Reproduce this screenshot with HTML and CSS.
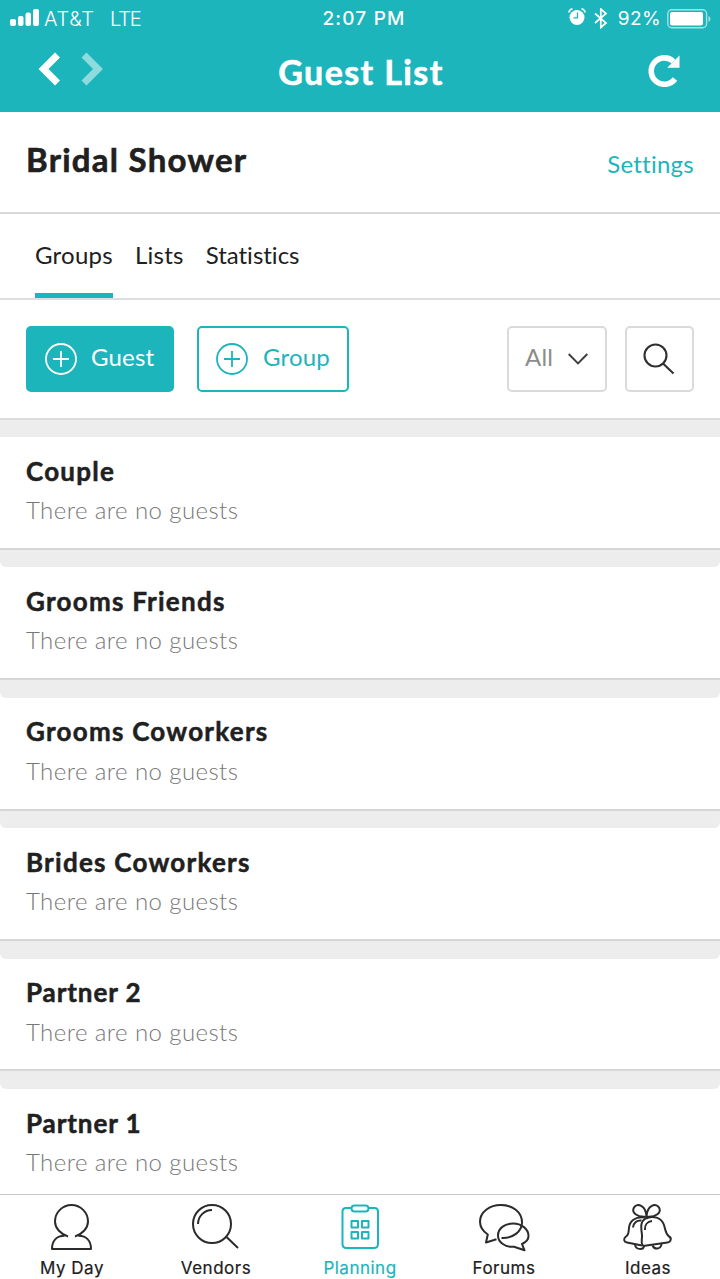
FILE: index.html
```html
<!DOCTYPE html>
<html lang="en">
<head>
<meta charset="utf-8">
<title>Guest List</title>
<link rel="stylesheet" href="styles.css">
</head>
<body>
<div class="app">
  <header class="header">
    <div class="status">
      <div class="status-left">
        <svg class="signal" width="30" height="20" viewBox="0 0 30 20" fill="#fff"><rect x="0" y="11" width="6" height="7" rx="2"/><rect x="8" y="8" width="5.500" height="10" rx="2"/><rect x="15.500" y="4.500" width="5.500" height="13.500" rx="2"/><rect x="23" y="1" width="6" height="17" rx="2"/></svg>
        <span class="carrier">AT&amp;T</span><span class="network">LTE</span>
      </div>
      <span class="time">2:07 PM</span>
      <div class="status-right">
        <svg class="alarm" width="18" height="18" viewBox="0 0 18 18"><circle cx="9" cy="9.500" r="7.500" fill="#fff"/><path d="M.8 4.500Q1.500 1.500 4.500.8M17.200 4.500Q16.500 1.500 13.500.8" stroke="#fff" stroke-width="1.600" fill="none"/><path d="M9.500 4.500v5.300H5.500" stroke="#1cb5bc" stroke-width="1.300" fill="none"/></svg>
        <svg class="bluetooth" width="14" height="21" viewBox="0 0 14 21" fill="none" stroke="#fff" stroke-width="1.700"><path d="M1 5.500l11 9.500-5.200 4.500V1L12 5.500 1 15"/></svg>
        <span class="percent">92%</span>
        <svg class="battery" width="44" height="20" viewBox="0 0 44 20"><rect x=".8" y=".8" width="38.800" height="18" rx="4" fill="none" stroke="#a4e1e3" stroke-width="1.400"/><rect x="3" y="3" width="33" height="13.600" rx="2" fill="#fff"/><path d="M41.500 7v6q2-1 2-3t-2-3z" fill="#a4e1e3"/></svg>
      </div>
    </div>
    <div class="nav">
      <svg class="arrows" width="68" height="36" viewBox="0 0 68 36" fill="none" stroke-width="7"><path d="M20.500 4L6.500 18l14 14" stroke="#fff"/><path d="M47 4L61 18 47 32" stroke="#8edbde"/></svg>
      <h1 class="nav-title">Guest List</h1>
      <svg class="reload" width="34" height="34" viewBox="0 0 34 34"><path d="M28 25A13.200 13.200 0 1 1 26.500 7.500" fill="none" stroke="#fff" stroke-width="5.600"/><path d="M32.500 1.500v12.300H20.200z" fill="#fff"/></svg>
    </div>
  </header>

  <section class="event">
    <h2 class="event-name">Bridal Shower</h2>
    <a class="settings">Settings</a>
  </section>

  <nav class="tabs">
    <a class="tab active">Groups</a>
    <a class="tab">Lists</a>
    <a class="tab">Statistics</a>
  </nav>

  <section class="tools">
    <button class="btn btn-guest"><svg width="32" height="32" viewBox="0 0 32 32" fill="none" stroke="currentColor" stroke-width="1.800"><circle cx="16" cy="16" r="15"/><path d="M16 8v16M8 16h16"/></svg><span>Guest</span></button>
    <button class="btn btn-group"><svg width="32" height="32" viewBox="0 0 32 32" fill="none" stroke="currentColor" stroke-width="1.800"><circle cx="16" cy="16" r="15"/><path d="M16 8v16M8 16h16"/></svg><span>Group</span></button>
    <button class="btn btn-all"><span>All</span><svg width="20" height="12" viewBox="0 0 20 12" fill="none" stroke="#3c3c3c" stroke-width="1.900"><path d="M.7 1L10 10.300 19.300 1"/></svg></button>
    <button class="btn btn-search"><svg width="32" height="32" viewBox="0 0 32 32" fill="none" stroke="#303030" stroke-width="2.100"><circle cx="12.500" cy="12.500" r="11"/><path d="M20 20.500L30.500 30.500"/></svg></button>
  </section>

  <main class="list">
    <article class="card"><h3>Couple</h3><p>There are no guests</p></article>
    <article class="card"><h3>Grooms Friends</h3><p>There are no guests</p></article>
    <article class="card"><h3>Grooms Coworkers</h3><p>There are no guests</p></article>
    <article class="card"><h3>Brides Coworkers</h3><p>There are no guests</p></article>
    <article class="card numbered"><h3>Partner 2</h3><p>There are no guests</p></article>
    <article class="card numbered"><h3>Partner 1</h3><p>There are no guests</p></article>
  </main>

  <footer class="tabbar">
    <a class="item"><svg width="52" height="50" viewBox="0 0 52 50"><path d="M22 33.500C14.500 31 9 25 9 18.500a16.500 16.500 0 0 1 33 0C42 25 36.500 31 29 33.500M18.500 32.800C10.500 33 6 38 6 46h39c0-8-4.500-13-12.500-13.200"/></svg><span>My Day</span></a>
    <a class="item"><svg width="52" height="50" viewBox="0 0 52 50"><circle cx="22" cy="21" r="19"/><path d="M8 21A14 14 0 0 1 22 7M36 33.500L48 45"/></svg><span>Vendors</span></a>
    <a class="item current"><svg width="52" height="50" viewBox="0 0 52 50"><path d="M17.500 5H12q-3.500 0-3.500 3.500v32.500q0 4 4 4h27.500q4 0 4-4V8.500q0-3.500-3.500-3.500h-6"/><rect x="17.500" y="2.500" width="17" height="6" rx="3"/><path d="M17.500 18h6.500v6.500h-6.500zM28 18h6.500v6.500h-6.500zM17.500 29h6.500v6.500h-6.500zM28 29h6.500v6.500h-6.500z"/></svg><span>Planning</span></a>
    <a class="item"><svg width="52" height="50" viewBox="0 0 52 50"><path d="M18.500 36.200L8 39.500 9.800 31.500C4.500 28 2 23.500 2 18.500 2 9 11.500 2 23 2s21 7 21 17.500C44 28 35.500 35.500 23.500 35"/><path d="M44 41l2.500 6.300L36 43.800C27.500 44.500 20 39.500 20 32.500 20 25.500 26.500 20.500 35 20.500s15.500 5.500 15.500 12.500q0 5-6.500 8z"/></svg><span>Forums</span></a>
    <a class="item bells"><svg width="52" height="50" viewBox="0 0 52 50"><path d="M25.500 13.500C16 14.500 10 9.500 13 4.500s12-2.500 12.500 9c.5-11.500 9.500-14 12.500-9s-3 10-12.500 9z"/><path d="M22 43C19 39 21.500 36.500 21 32 20 24 19 19 24.500 15.500 32 12 40.500 14.500 43 22c2 6.500 1.500 9 5 11.500 3 1.500 2 5.500-1.500 6L22 43"/><path d="M23.500 14.500C14 13.500 8.500 18 8 25c-.5 6-1 7.500-3.500 9-2.500 2-1.500 5 1.500 5.500L21 42.500M12 24.500c.5-5 4-7.500 8.500-7M24 27c-.5-5 2.500-8.500 7-9M14 41.500q.5 4.500 5.500 4.500 3 0 3.500-3M31.500 42.500q1.500 3.500 5 3 3.500-.5 4-4.500"/></svg><span>Ideas</span></a>
  </footer>
</div>
</body>
</html>
```
FILE: styles.css
```css
* { box-sizing: border-box; }
body { margin: 0; background: #fff; font-family: Lato, "Liberation Sans", sans-serif; font-variant-ligatures: none; color: #202020; }
h1, h2, h3, p { margin: 0; }
svg { display: block; flex: none; }
.app { width: 720px; height: 1279px; overflow: hidden; display: flex; flex-direction: column; background: #fff; }

.header { height: 111.500px; flex: none; background: #1cb5bc; color: #fff; }
.status { height: 37px; display: grid; grid-template-columns: 1fr auto 1fr; align-items: center; padding: 0 9px 0 10px; font-family: Inter, sans-serif; font-size: 19px; line-height: 24px; }
.status-left, .status-right { display: flex; align-items: center; }
.signal { margin-right: 4px; margin-top: -2px; }
.carrier { width: 66px; font-size: 20px; letter-spacing: 0.7px; font-weight: 300; }
.network { font-size: 20px; letter-spacing: -1.2px; font-weight: 300; }
.time { font-weight: 500; letter-spacing: 1.2px; margin-left: 7px; }
.status-right { justify-content: flex-end; }
.alarm { margin-right: 8px; margin-top: -3px; }
.bluetooth { margin-right: 10px; }
.percent { margin-right: 6px; letter-spacing: 0.4px; }
.nav { height: 74px; display: grid; grid-template-columns: 1fr auto 1fr; padding: 0 39px 0 37px; }
.arrows { margin-top: 14px; }
.nav-title { font-size: 34px; line-height: 70px; font-weight: 700; letter-spacing: 1.400px; -webkit-text-stroke: 0.6px; margin-left: 4px; }
.reload { margin-top: 17px; justify-self: end; }

.event { height: 102.500px; flex: none; border-bottom: 2px solid #d9d9d9; display: flex; justify-content: space-between; padding: 0 26px; }
.event-name { font-size: 33px; line-height: 95px; font-weight: 700; letter-spacing: 1.250px; -webkit-text-stroke: 0.6px; }
.settings { font-size: 24px; line-height: 104px; color: #1cb5bc; letter-spacing: 0.25px; }

.tabs { height: 86px; flex: none; display: flex; gap: 22px; padding-left: 35px; border-bottom: 2px solid #dedede; font-size: 24px; line-height: 81px; letter-spacing: 0.25px; }
.tab { height: 84px; }
.active { border-bottom: 5px solid #1cb5bc; }
.tab:last-child { letter-spacing: 0; }

.tools { height: 119.500px; flex: none; display: flex; padding: 25.500px 26px 0; border-bottom: 2px solid #dcdcdc; }
.btn { height: 66px; border: 2px solid #dadada; border-radius: 5px; background: #fff; display: flex; align-items: center; font-family: inherit; font-size: 24px; line-height: 30px; padding: 0 17px; letter-spacing: 0.2px; }
.btn span { margin-top: -3px; }
.btn-guest { width: 148px; background: #1cb5bc; border-color: #1cb5bc; color: #fff; gap: 14px; margin-right: 23px; }
.btn-group { width: 152px; border-color: #1cb5bc; color: #1cb5bc; gap: 15px; }
.btn-all { width: 100px; color: #8c8c8c; margin-left: auto; margin-right: 18px; justify-content: space-between; padding: 0 17px 0 16px; }
.btn-search { width: 69px; padding: 0 2px 0 0; justify-content: center; }

.list { flex: 1; min-height: 0; overflow: hidden; }
.card { height: 130.400px; border-bottom: 2px solid #d6d6d6; padding: 0 26px; }
.card::before { content: ""; display: block; height: 17.500px; margin: 0 -26px 15.700px; background: #ededed; border-radius: 0 0 6px 6px; }
.card:first-child::before { border-radius: 0; }
.card h3 { font-size: 26px; line-height: 36px; font-weight: 700; letter-spacing: 1.250px; -webkit-text-stroke: 0.5px; }
.numbered h3 { letter-spacing: 0.900px; }
.card p { font-size: 24px; line-height: 36px; margin-top: 3.300px; font-weight: 300; color: #777; letter-spacing: 0.42px; }

.tabbar { height: 85px; flex: none; border-top: 1px solid #c6c6c6; background: #fff; display: grid; grid-template-columns: repeat(5, 144px); font-family: Inter, sans-serif; font-size: 17px; letter-spacing: 0.500px; -webkit-text-stroke: 0.2px; }
.item { display: flex; flex-direction: column; align-items: center; padding-top: 8px; }
.item svg { fill: none; stroke: #2b2b2b; stroke-width: 2; stroke-linejoin: round; }
.item span { line-height: 24px; margin-top: 3px; }
.current { color: #1cb5bc; }
.current svg { stroke: #1cb5bc; }
.bells svg { margin-left: -2px; }
```
